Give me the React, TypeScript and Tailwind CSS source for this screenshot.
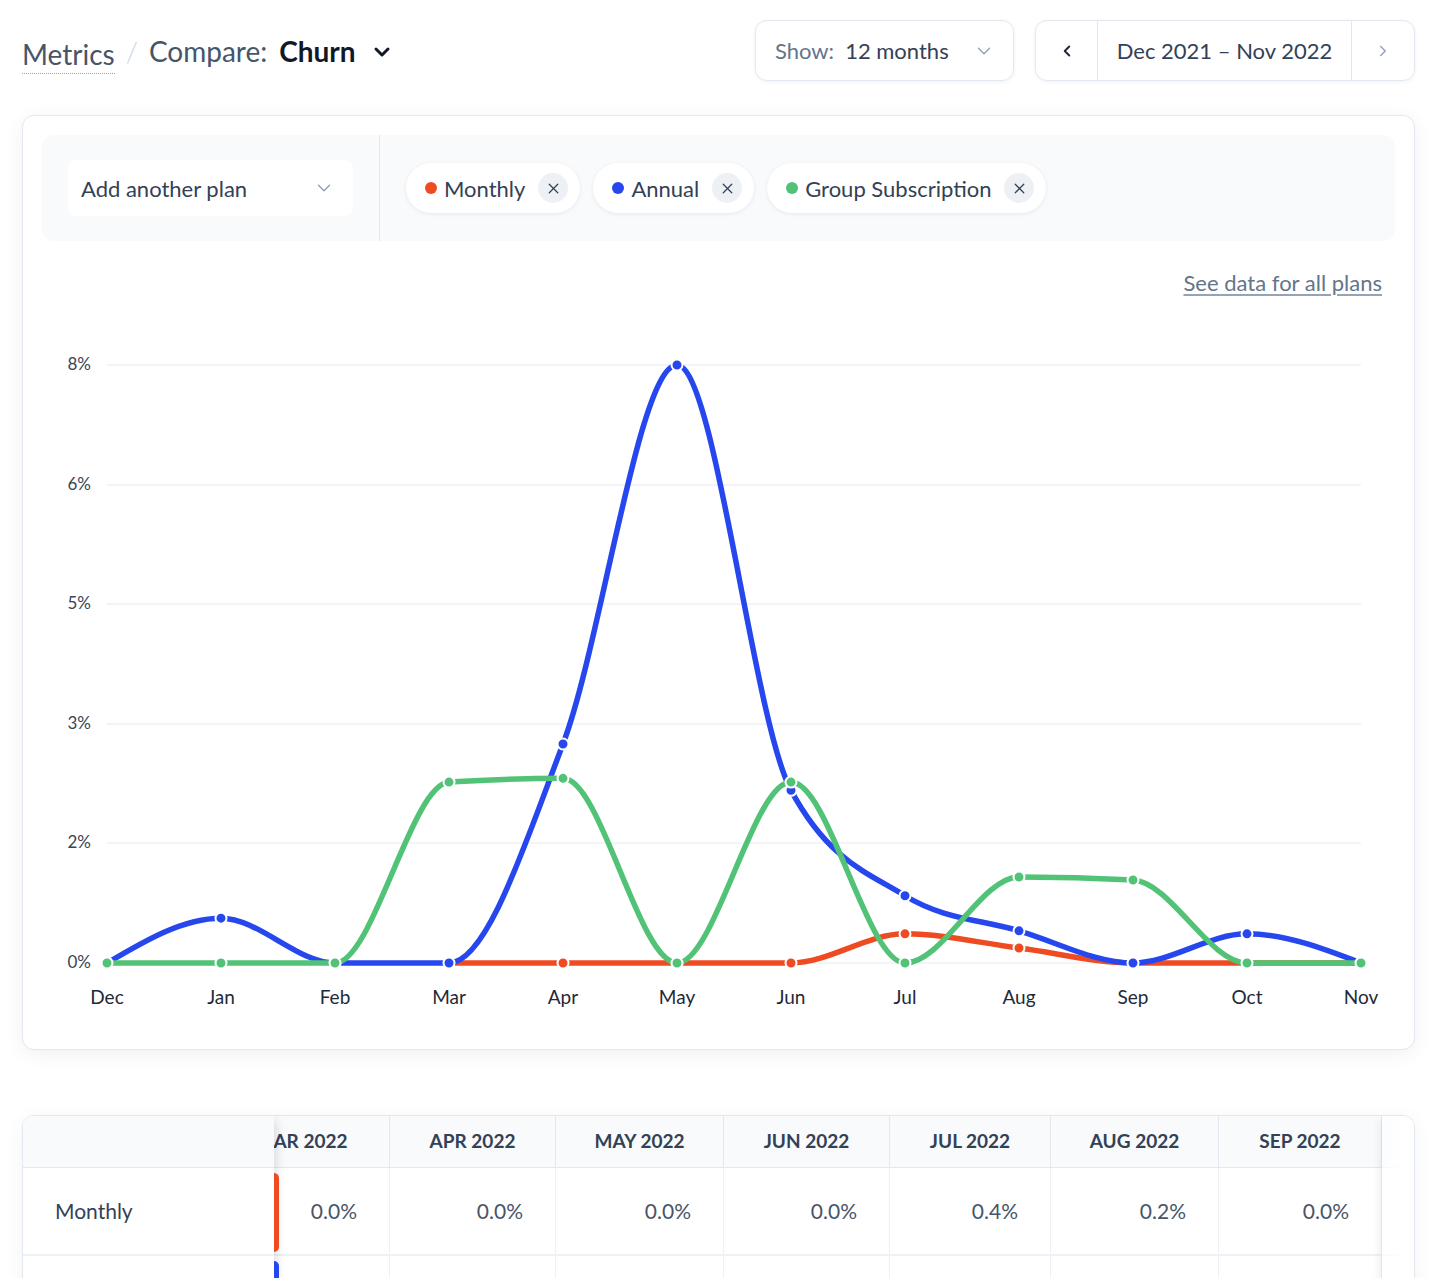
import { ChevronDown, ChevronLeft, ChevronRight, X } from "lucide-react";

const FONT = "font-['Lato','Open_Sans',sans-serif]";

const MONTHS = ["Dec", "Jan", "Feb", "Mar", "Apr", "May", "Jun", "Jul", "Aug", "Sep", "Oct", "Nov"];

// chart geometry, in page pixels
const X0 = 108;
const DX = 114;
const Y0 = 963;
const PX_PER_PCT = 74.75;

type Series = { name: string; color: string; start: number; values: number[] };

const series: Series[] = [
    { name: "Monthly", color: "#ef4b22", start: 3, values: [0, 0, 0, 0, 0.39, 0.2, 0, 0, 0] },
    { name: "Annual", color: "#2747ee", start: 0, values: [0, 0.6, 0, 0, 2.93, 8, 2.31, 0.9, 0.43, 0, 0.39, 0] },
    { name: "Group Subscription", color: "#52c277", start: 0, values: [0, 0, 0, 2.42, 2.47, 0, 2.42, 0, 1.15, 1.11, 0, 0] },
];

const sign = (v: number) => (v < 0 ? -1 : v > 0 ? 1 : 0);

// monotone cubic interpolation (same as d3 curveMonotoneX)
function monotonePath(pts: [number, number][]) {
    const n = pts.length;
    const t: number[] = new Array(n).fill(0);
    for (let i = 1; i < n - 1; i++) {
        const [x0, y0] = pts[i - 1];
        const [x1, y1] = pts[i];
        const [x2, y2] = pts[i + 1];
        const h0 = x1 - x0, h1 = x2 - x1;
        const s0 = (y1 - y0) / h0, s1 = (y2 - y1) / h1;
        const p = (s0 * h1 + s1 * h0) / (h0 + h1);
        t[i] = (sign(s0) + sign(s1)) * Math.min(Math.abs(s0), Math.abs(s1), 0.5 * Math.abs(p)) || 0;
    }
    if (n > 1) {
        const h = pts[1][0] - pts[0][0];
        t[0] = (3 * (pts[1][1] - pts[0][1]) / h - t[1]) / 2;
        const hl = pts[n - 1][0] - pts[n - 2][0];
        t[n - 1] = (3 * (pts[n - 1][1] - pts[n - 2][1]) / hl - t[n - 2]) / 2;
    }
    let d = `M${pts[0][0]},${pts[0][1]}`;
    for (let i = 0; i < n - 1; i++) {
        const [x0, y0] = pts[i];
        const [x1, y1] = pts[i + 1];
        const dx = (x1 - x0) / 3;
        d += ` C${x0 + dx},${y0 + dx * t[i]} ${x1 - dx},${y1 - dx * t[i + 1]} ${x1},${y1}`;
    }
    return d;
}

const toPoints = (s: Series) =>
    s.values.map((v, i) => [X0 + (s.start + i) * DX, Y0 - v * PX_PER_PCT] as [number, number]);

function ChurnChart() {
    const grid = [
        { y: 365, label: "8%" },
        { y: 485, label: "6%" },
        { y: 604, label: "5%" },
        { y: 724, label: "3%" },
        { y: 843, label: "2%" },
        { y: 963, label: "0%" },
    ];
    return (
        <svg width={1390} height={754} viewBox="24 295 1390 754" className="block">
            {grid.map((g) => (
                <g key={g.label}>
                    <line x1={108} x2={1362} y1={g.y} y2={g.y} stroke="#eef0f5" strokeWidth={1.5} />
                    <text x={92} y={g.y + 5} textAnchor="end" fontSize={17} fill="#3b4556" fontFamily="Lato, sans-serif">
                        {g.label}
                    </text>
                </g>
            ))}
            {MONTHS.map((m, i) => (
                <text key={m} x={X0 + i * DX} y={1004} textAnchor="middle" fontSize={19} fill="#1f2937" fontFamily="Lato, sans-serif">
                    {m}
                </text>
            ))}
            {series.map((s) => {
                const pts = toPoints(s);
                return (
                    <g key={s.name}>
                        <path d={monotonePath(pts)} fill="none" stroke={s.color} strokeWidth={5.5} strokeLinecap="round" strokeLinejoin="round" />
                        {pts.map(([x, y], i) => (
                            <circle key={i} cx={x} cy={y} r={5.5} fill={s.color} stroke="#fff" strokeWidth={2} />
                        ))}
                    </g>
                );
            })}
        </svg>
    );
}

function PlanPill({ name, color }: { name: string; color: string }) {
    return (
        <div className="h-[50px] rounded-full bg-white shadow-[0_1px_4px_rgba(15,23,42,0.08)] flex items-center pl-[19px] pr-[12px]">
            <span className="w-3 h-3 rounded-full" style={{ backgroundColor: color }} />
            <span className="ml-[7px] text-[22px] text-[#334155]">{name}</span>
            <span className="ml-[13px] w-[30px] h-[30px] rounded-full bg-[#edf1f5] flex items-center justify-center text-[#334155]">
                <X size={17} strokeWidth={1.8} />
            </span>
        </div>
    );
}

const COLS = [
    { label: "MAR 2022", w: "w-[168px]" },
    { label: "APR 2022", w: "w-[166px]" },
    { label: "MAY 2022", w: "w-[168px]" },
    { label: "JUN 2022", w: "w-[166px]" },
    { label: "JUL 2022", w: "w-[161px]" },
    { label: "AUG 2022", w: "w-[168px]" },
    { label: "SEP 2022", w: "w-[163px]" },
    { label: "OCT 2022", w: "w-[166px]" },
];

const rows = [
    { name: "Monthly", color: "#ef4b22", values: ["0.0%", "0.0%", "0.0%", "0.0%", "0.4%", "0.2%", "0.0%", "0.0%"] },
    { name: "Annual", color: "#2747ee", values: ["0.0%", "2.9%", "8.0%", "2.3%", "0.9%", "0.4%", "0.0%", "0.4%"] },
    { name: "Group Subscription", color: "#52c277", values: ["2.4%", "2.5%", "0.0%", "2.4%", "0.0%", "1.2%", "1.1%", "0.0%"] },
];

function DataTable() {
    return (
        <div className="relative rounded-xl border border-[#e2e8f0] bg-white overflow-hidden shadow-[0_4px_20px_rgba(15,23,42,0.05)]">
            <div className="flex">
                {/* sticky plan column */}
                <div className="relative z-10 w-[251px] shrink-0 bg-white shadow-[6px_0_10px_-4px_rgba(15,23,42,0.14)]">
                    <div className="h-[52px] bg-[#f8fafc] border-b border-[#e2e8f0]" />
                    {rows.map((r) => (
                        <div key={r.name} className="relative h-[88px] border-b-2 border-[#eef1f5] flex items-center pl-[32px] text-[21px] text-[#334155]">
                            {r.name}
                            <span className="absolute left-full top-[5px] bottom-[2px] w-[5px] rounded-r-md" style={{ backgroundColor: r.color }} />
                        </div>
                    ))}
                </div>
                <div className="flex-1 overflow-hidden">
                    <div className="ml-[-52px] w-max">
                        <div className="flex h-[52px] bg-[#f8fafc] border-b border-[#e2e8f0]">
                            {COLS.map((c, i) => (
                                <div key={c.label} className={`${c.w} shrink-0 border-r border-[#e2e8f0] flex items-center justify-center text-[19px] font-bold text-[#334155] ${i === 0 ? "pr-[8px]" : ""}`}>
                                    {c.label}
                                </div>
                            ))}
                        </div>
                        {rows.map((r) => (
                            <div key={r.name} className="flex h-[88px] border-b-2 border-[#eef1f5]">
                                {r.values.map((v, i) => (
                                    <div key={i} className={`${COLS[i].w} shrink-0 border-r border-[#eef1f5] flex items-center justify-end pr-[32px] text-[21px] text-[#475569]`}>
                                        {v}
                                    </div>
                                ))}
                            </div>
                        ))}
                    </div>
                </div>
            </div>
            <div className="absolute right-0 top-0 bottom-0 w-8 bg-gradient-to-l from-white via-white/90 to-white/60 shadow-[-6px_0_10px_-4px_rgba(15,23,42,0.08)] z-20" />
        </div>
    );
}

export default function App() {
    return (
        <main className={`${FONT} h-[1278px] overflow-hidden bg-white pl-[22px] pr-[25px] pt-[20px]`}>
            {/* Header */}
            <div className="flex items-center justify-between h-[61px]">
                <div className="flex items-center text-[28px] text-[#475569]">
                    <span className="border-b border-dotted border-[#94a3b8] pb-[3px] mt-[10px] leading-[32px]">Metrics</span>
                    <span className="mx-[11px] text-[#cbd5e1] font-light">/</span>
                    <span>Compare:</span>
                    <span className="ml-[12px] font-bold text-[#111827]">Churn</span>
                    <ChevronDown size={24} strokeWidth={3} className="ml-[14px] text-[#111827] mt-[2px]" />
                </div>
                <div className="flex items-center gap-[21px]">
                    <div className="w-[259px] h-[61px] rounded-xl border border-[#e2e8f0] shadow-[0_1px_4px_rgba(15,23,42,0.06)] flex items-center pl-[19px] pr-[18px] text-[22px]">
                        <span className="text-[#64748b]">Show:</span>
                        <span className="ml-[11px] text-[#334155]">12 months</span>
                        <ChevronDown size={22} strokeWidth={1.6} className="ml-auto text-[#94a3b8]" />
                    </div>
                    <div className="w-[380px] h-[61px] rounded-xl border border-[#e2e8f0] shadow-[0_1px_4px_rgba(15,23,42,0.06)] flex items-stretch text-[22px] text-[#334155]">
                        <div className="w-[62px] border-r border-[#e2e8f0] flex items-center justify-center text-[#1f2937]">
                            <ChevronLeft size={18} strokeWidth={2.6} />
                        </div>
                        <div className="flex-1 flex items-center justify-center">Dec 2021 – Nov 2022</div>
                        <div className="w-[63px] border-l border-[#e2e8f0] flex items-center justify-center text-[#94a3b8]">
                            <ChevronRight size={18} strokeWidth={2} />
                        </div>
                    </div>
                </div>
            </div>

            {/* Chart card */}
            <section className="mt-[34px] rounded-xl border border-[#e2e8f0] bg-white shadow-[0_4px_20px_rgba(15,23,42,0.06)] overflow-hidden">
                <div className="mx-[19px] mt-[19px] h-[106px] rounded-xl bg-[#f8fafc] flex">
                    <div className="w-[338px] shrink-0 border-r border-[#e2e8f0] flex items-center pl-[26px]">
                        <div className="w-[285px] h-[56px] rounded-lg bg-white flex items-center pl-[13px] pr-[18px] text-[22px] text-[#334155]">
                            Add another plan
                            <ChevronDown size={22} strokeWidth={1.6} className="ml-auto text-[#94a3b8]" />
                        </div>
                    </div>
                    <div className="flex items-center gap-[13px] pl-[26px]">
                        {series.map((s) => (
                            <PlanPill key={s.name} name={s.name} color={s.color} />
                        ))}
                    </div>
                </div>
                <div className="mt-[30px] h-[24px] leading-[24px] flex justify-end pr-[32px]">
                    <a className="text-[22px] text-[#64748b] underline underline-offset-[3px] decoration-[#94a3b8]">See data for all plans</a>
                </div>
                <ChurnChart />
            </section>

            <div className="mt-[65px]">
                <DataTable />
            </div>
        </main>
    );
}
